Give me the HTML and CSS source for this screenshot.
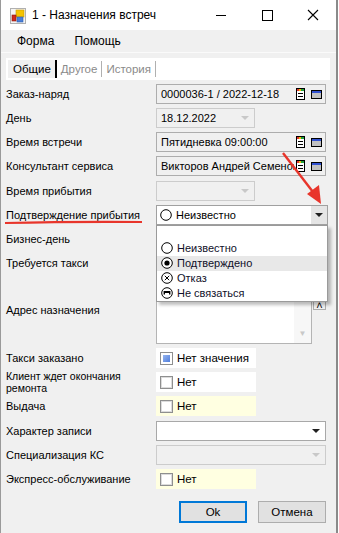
FILE: index.html
```html
<!DOCTYPE html>
<html lang="ru">
<head>
    <meta charset="utf-8">
    <title>1 - Назначения встреч</title>
    <link rel="stylesheet" href="styles.css">
</head>
<body>
<div class="window">
    <div class="titlebar">
        <svg class="app-icon" width="16" height="16" viewBox="0 0 16 16">
            <rect x="0.5" y="0.5" width="15" height="15" fill="#f4f4f4" stroke="#b0b0b0"/>
            <rect x="6" y="2" width="8" height="7" fill="#f5c400" stroke="#c89a00" stroke-width="0.6"/>
            <rect x="7" y="9" width="6" height="5" fill="#4a7fd8" stroke="#2c5fb0" stroke-width="0.6"/>
            <rect x="2" y="7" width="4" height="6" fill="#d02a1e" stroke="#8a1810" stroke-width="0.6"/>
        </svg>
        <span class="title">1 - Назначения встреч</span>
        <div class="win-buttons">
            <svg width="46" height="30" viewBox="0 0 46 30"><line x1="18" y1="15.5" x2="28" y2="15.5" stroke="#000"/></svg>
            <svg width="46" height="30" viewBox="0 0 46 30"><rect x="18.5" y="10.5" width="10" height="10" fill="none" stroke="#000"/></svg>
            <svg width="46" height="30" viewBox="0 0 46 30"><path d="M18 10 L28 20 M28 10 L18 20" stroke="#000" stroke-width="1.1"/></svg>
        </div>
    </div>

    <div class="menubar">
        <span class="menu-item">Форма</span>
        <span class="menu-item">Помощь</span>
    </div>

    <div class="tabs">
        <span class="tab active">Общие</span>
        <span class="tab">Другое</span>
        <span class="tab">История</span>
    </div>

    <div class="form">
        <label class="lbl">Заказ-наряд</label>
        <div class="field wide">
            <span class="value">0000036-1 / 2022-12-18</span>
            <span class="tools">
                <svg width="9" height="12" viewBox="0 0 9 12"><rect x="0.5" y="0.5" width="8" height="11" fill="#fff" stroke="#000"/><rect x="1" y="1" width="2" height="2" fill="#e03030"/><rect x="3" y="1" width="2" height="2" fill="#f0c000"/><rect x="5" y="1" width="3" height="2" fill="#20a040"/><line x1="2" y1="5.5" x2="7" y2="5.5" stroke="#000"/><line x1="2" y1="8.5" x2="7" y2="8.5" stroke="#000"/></svg>
                <svg width="11" height="9" viewBox="0 0 11 9"><rect x="0.5" y="0.5" width="10" height="8" fill="#c0c0c0" stroke="#000"/><rect x="1" y="1" width="9" height="2" fill="#3050d0"/></svg>
            </span>
        </div>

        <label class="lbl">День</label>
        <div class="field short disabled">
            <span class="value">18.12.2022</span>
            <span class="arrow grey"></span>
        </div>

        <label class="lbl">Время встречи</label>
        <div class="field wide">
            <span class="value">Пятидневка 09:00:00</span>
            <span class="tools">
                <svg width="9" height="12" viewBox="0 0 9 12"><rect x="0.5" y="0.5" width="8" height="11" fill="#fff" stroke="#000"/><rect x="1" y="1" width="2" height="2" fill="#e03030"/><rect x="3" y="1" width="2" height="2" fill="#f0c000"/><rect x="5" y="1" width="3" height="2" fill="#20a040"/><line x1="2" y1="5.5" x2="7" y2="5.5" stroke="#000"/><line x1="2" y1="8.5" x2="7" y2="8.5" stroke="#000"/></svg>
                <svg width="11" height="9" viewBox="0 0 11 9"><rect x="0.5" y="0.5" width="10" height="8" fill="#c0c0c0" stroke="#000"/><rect x="1" y="1" width="9" height="2" fill="#3050d0"/></svg>
            </span>
        </div>

        <label class="lbl">Консультант сервиса</label>
        <div class="field wide">
            <span class="value">Викторов Андрей Семенов</span>
            <span class="tools">
                <svg width="9" height="12" viewBox="0 0 9 12"><rect x="0.5" y="0.5" width="8" height="11" fill="#fff" stroke="#000"/><rect x="1" y="1" width="2" height="2" fill="#e03030"/><rect x="3" y="1" width="2" height="2" fill="#f0c000"/><rect x="5" y="1" width="3" height="2" fill="#20a040"/><line x1="2" y1="5.5" x2="7" y2="5.5" stroke="#000"/><line x1="2" y1="8.5" x2="7" y2="8.5" stroke="#000"/></svg>
                <svg width="11" height="9" viewBox="0 0 11 9"><rect x="0.5" y="0.5" width="10" height="8" fill="#c0c0c0" stroke="#000"/><rect x="1" y="1" width="9" height="2" fill="#3050d0"/></svg>
            </span>
        </div>

        <label class="lbl">Время прибытия</label>
        <div class="field short disabled">
            <span class="value"></span>
            <span class="arrow grey"></span>
        </div>

        <label class="lbl">Подтверждение прибытия</label>
        <div class="combo">
            <svg class="radio" width="12" height="12" viewBox="0 0 12 12"><circle cx="6" cy="6" r="5.3" fill="#fff" stroke="#000"/></svg>
            <span class="value">Неизвестно</span>
            <span class="drop-btn"><span class="arrow"></span></span>
            <div class="dropdown">
                <div class="opt blank"></div>
                <div class="opt">
                    <svg class="radio" width="12" height="12" viewBox="0 0 12 12"><circle cx="6" cy="6" r="5.3" fill="#fff" stroke="#000"/></svg>
                    Неизвестно
                </div>
                <div class="opt hover">
                    <svg class="radio" width="12" height="12" viewBox="0 0 12 12"><circle cx="6" cy="6" r="5.3" fill="#fff" stroke="#000"/><circle cx="6" cy="6" r="2.6" fill="#000"/></svg>
                    Подтверждено
                </div>
                <div class="opt">
                    <svg class="radio" width="12" height="12" viewBox="0 0 12 12"><circle cx="6" cy="6" r="5.3" fill="#fff" stroke="#000"/><path d="M3.8 3.8 L8.2 8.2 M8.2 3.8 L3.8 8.2" stroke="#000"/></svg>
                    Отказ
                </div>
                <div class="opt">
                    <svg class="radio" width="12" height="12" viewBox="0 0 12 12"><circle cx="6" cy="6" r="5.3" fill="#fff" stroke="#000"/><path d="M2.6 4 H9.4 V7.6 H8 V6 H4 V7.6 H2.6 Z" fill="#000"/></svg>
                    Не связаться
                </div>
            </div>
        </div>

        <label class="lbl">Бизнес-день</label>
        <div></div>

        <label class="lbl">Требуется такси</label>
        <div></div>

        <label class="lbl top">Адрес назначения</label>
        <div class="memo-wrap">
            <div class="memo">
                <span class="memo-scroll">&#9660;</span>
            </div>
            <span class="memo-btn">&#708;</span>
        </div>

        <label class="lbl">Такси заказано</label>
        <div class="check white">
            <span class="box filled"></span>
            <span>Нет значения</span>
        </div>

        <label class="lbl small">Клиент ждет окончания ремонта</label>
        <div class="check white">
            <span class="box"></span>
            <span>Нет</span>
        </div>

        <label class="lbl">Выдача</label>
        <div class="check yellow">
            <span class="box"></span>
            <span>Нет</span>
        </div>

        <label class="lbl">Характер записи</label>
        <div class="field wide white">
            <span class="value"></span>
            <span class="arrow"></span>
        </div>

        <label class="lbl">Специализация КС</label>
        <div class="field wide disabled">
            <span class="value"></span>
            <span class="arrow grey"></span>
        </div>

        <label class="lbl">Экспресс-обслуживание</label>
        <div class="check yellow">
            <span class="box"></span>
            <span>Нет</span>
        </div>
    </div>

    <div class="actions">
        <button class="btn focused">Ok</button>
        <button class="btn">Отмена</button>
    </div>

    <svg class="annotation" width="339" height="533" viewBox="0 0 339 533">
        <path d="M5 223 Q70 221.5 142 222" stroke="#e8352b" stroke-width="2.2" fill="none"/>
        <line x1="283" y1="153" x2="313" y2="192" stroke="#e8352b" stroke-width="2.4"/>
        <polygon points="321,204 307,194 319,185" fill="#e8352b"/>
    </svg>
</div>
</body>
</html>
```

FILE: styles.css
```css
body {
    margin: 0;
    background: #fff;
    font-family: "Liberation Sans", Arial, sans-serif;
    font-size: 11px;
    color: #000;
}
.window {
    position: relative;
    width: 335px;
    height: 533px;
    background: #f0f0f0;
    border-left: 1px solid #9a9a9a;
    border-right: 2px solid #8a8a8a;
    overflow: hidden;
}
.titlebar {
    height: 30px;
    background: #fff;
    display: flex;
    align-items: center;
}
.app-icon {
    margin-left: 9px;
    margin-top: 1px;
}
.title {
    margin-left: 6px;
    font-size: 12px;
}
.win-buttons {
    margin-left: auto;
    display: flex;
}
.menubar {
    height: 22px;
    display: flex;
    align-items: center;
    padding-left: 8px;
    gap: 4px;
    font-size: 12px;
    border-bottom: 1px solid #fafafa;
}
.menu-item {
    padding: 0 8px;
}
.tabs {
    margin: 5px 6px 0 5px;
    height: 22px;
    background: #fff;
    display: flex;
    align-items: center;
    font-size: 11.5px;
}
.tab {
    color: #8a8a8a;
    padding: 0 4px;
    border-right: 1px solid #b0b0b0;
    line-height: 16px;
}
.tab.active {
    color: #000;
    background: #f0f0f0;
    margin-left: 2px;
    padding: 1px 4px 1px 5px;
    border-right: 2px solid #000;
}
.form {
    margin-top: 2px;
    padding-left: 5px;
    display: grid;
    grid-template-columns: 150px 1fr;
    grid-template-rows: 24px 24px 24px 24px 25px 23px 25px 24px 71px 24px 24px 24px 25px 24px 24px;
}
.lbl {
    align-self: center;
    white-space: nowrap;
}
.lbl.top {
    align-self: start;
    padding-top: 29px;
}
.lbl.small {
    font-size: 10.5px;
    line-height: 12px;
    white-space: normal;
    width: 130px;
}
.field {
    align-self: center;
    height: 20px;
    box-sizing: border-box;
    border: 1px solid #adadad;
    background: #f0f0f0;
    display: flex;
    align-items: center;
    padding-left: 4px;
}
.field.wide {
    width: 170px;
}
.field.short {
    width: 99px;
}
.field.disabled {
    border-color: #cccccc;
}
.field.white {
    background: #fff;
    border-color: #a8a8a8;
}
.value {
    flex: 1;
    min-width: 0;
    white-space: nowrap;
    overflow: hidden;
}
.tools {
    display: flex;
    align-items: center;
    gap: 6px;
    padding: 0 3px 0 2px;
    background: #f0f0f0;
}
.arrow {
    width: 0;
    height: 0;
    border-left: 4px solid transparent;
    border-right: 4px solid transparent;
    border-top: 4px solid #202020;
    margin-right: 5px;
}
.arrow.grey {
    border-top-color: #c8c8c8;
}
.combo {
    position: relative;
    align-self: center;
    width: 172px;
    height: 20px;
    box-sizing: border-box;
    border: 1px solid #a0a0a0;
    background: #fff;
    display: flex;
    align-items: center;
    padding-left: 3px;
}
.radio {
    margin-right: 4px;
    flex: none;
}
.drop-btn {
    width: 16px;
    height: 18px;
    background: #e5e5e5;
    display: flex;
    align-items: center;
    justify-content: center;
}
.drop-btn .arrow {
    margin: 0;
}
.dropdown {
    position: absolute;
    left: -1px;
    top: 19px;
    width: 172px;
    height: 77px;
    box-sizing: border-box;
    border: 1px solid #9a9a9a;
    background: #fff;
    box-shadow: 3px 3px 3px rgba(0, 0, 0, 0.25);
    padding-top: 1px;
    z-index: 2;
}
.opt {
    height: 15px;
    display: flex;
    align-items: center;
    padding-left: 4px;
    color: #10102a;
}
.opt.blank {
    height: 14px;
}
.opt.hover {
    background: #e8e8e8;
}
.memo-wrap {
    margin-top: 15px;
    align-self: start;
    display: flex;
    align-items: flex-start;
}
.memo {
    width: 156px;
    height: 54px;
    box-sizing: border-box;
    border: 1px solid #b4b4b4;
    background: #fff;
    position: relative;
}
.memo-scroll {
    position: absolute;
    right: 0;
    top: 0;
    bottom: 0;
    width: 17px;
    background: #f7f7f7;
    color: #c8c8c8;
    font-size: 8px;
    display: flex;
    align-items: flex-end;
    justify-content: center;
    padding-bottom: 5px;
    box-sizing: border-box;
}
.memo-btn {
    margin: 6px 0 0 1px;
    width: 13px;
    height: 14px;
    box-sizing: border-box;
    border: 1px solid #adadad;
    background: #f0f0f0;
    font-size: 11px;
    line-height: 16px;
    text-align: center;
}
.check {
    align-self: center;
    width: 100px;
    height: 20px;
    display: flex;
    align-items: center;
    padding-left: 4px;
    box-sizing: border-box;
    gap: 4px;
    font-size: 11.5px;
}
.check.white {
    background: #fff;
}
.check.yellow {
    background: #ffffe1;
}
.box {
    width: 13px;
    height: 13px;
    box-sizing: border-box;
    border: 1px solid #8e8f8f;
    background: #fff;
    box-shadow: inset 0 0 0 1px #dcdcdc;
}
.box.filled {
    background: linear-gradient(135deg, #a9c4f5, #3d6fd6);
    box-shadow: inset 0 0 0 2px #fff;
}
.actions {
    display: flex;
    justify-content: flex-end;
    gap: 11px;
    padding-right: 10px;
    margin-top: 10px;
}
.btn {
    width: 68px;
    height: 22px;
    box-sizing: border-box;
    border: 1px solid #adadad;
    background: #e1e1e1;
    font-family: "Liberation Sans", Arial, sans-serif;
    font-size: 11.5px;
    padding: 0;
}
.btn.focused {
    border: 2px solid #0078d7;
}
.annotation {
    position: absolute;
    left: -1px;
    top: 0;
    pointer-events: none;
    z-index: 5;
}
```
